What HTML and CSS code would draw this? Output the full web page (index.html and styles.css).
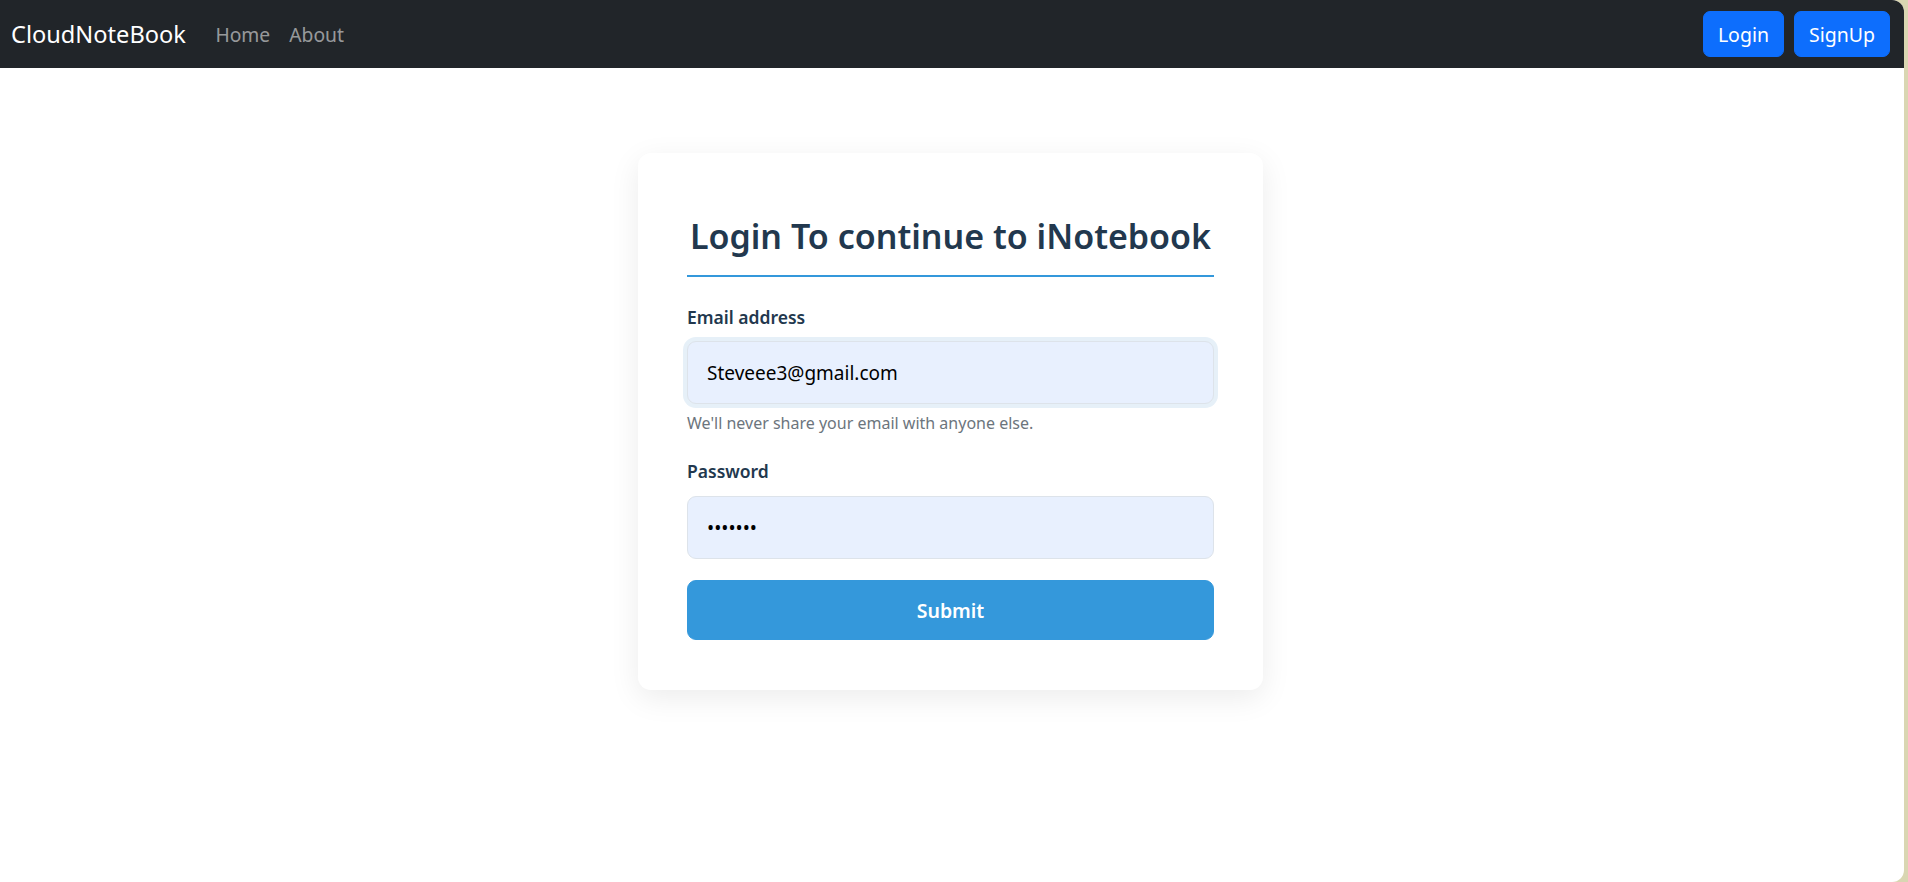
FILE: index.html
```html
<!DOCTYPE html>
<html lang="en">
<head>
<meta charset="utf-8">
<title>CloudNoteBook</title>
<link rel="stylesheet" href="styles.css">
</head>
<body>
<div class="window">
  <nav class="navbar">
    <div class="nav-left">
      <a class="brand" href="#">CloudNoteBook</a>
      <a class="nav-link" href="#">Home</a>
      <a class="nav-link" href="#">About</a>
    </div>
    <div class="nav-right">
      <a class="btn-nav" href="#">Login</a>
      <a class="btn-nav" href="#">SignUp</a>
    </div>
  </nav>
  <main class="main">
    <div class="card">
      <h2 class="title">Login To continue to iNotebook</h2>
      <form class="form">
        <label class="label" for="email">Email address</label>
        <input class="input input-focus" id="email" type="email" value="Steveee3@gmail.com">
        <div class="help">We'll never share your email with anyone else.</div>
        <label class="label label-pw" for="password">Password</label>
        <input class="input input-pw" id="password" type="password" value="1234567">
        <button class="submit" type="button">Submit</button>
      </form>
    </div>
  </main>
</div>
</body>
</html>
```

FILE: styles.css
```css
html, body {
  margin: 0;
  padding: 0;
  background: #d9d6b2;
  font-family: "Noto Sans", "Open Sans", sans-serif;
}

.window {
  width: 1904px;
  height: 882px;
  background: #ffffff;
  border-radius: 0 12px 12px 0;
  overflow: hidden;
}

.navbar {
  height: 68px;
  background: #212529;
  display: flex;
  align-items: center;
  justify-content: space-between;
  padding: 0 14px 0 11px;
  box-sizing: border-box;
}

.nav-left {
  display: flex;
  align-items: center;
}

.brand {
  color: #ffffff;
  text-decoration: none;
  font-size: 23.6px;
  margin-right: 20px;
}

.nav-link {
  color: rgba(255, 255, 255, 0.55);
  text-decoration: none;
  font-size: 19.3px;
  padding: 0 9.5px;
}

.nav-right {
  display: flex;
  gap: 10px;
}

.btn-nav {
  display: flex;
  align-items: center;
  height: 46px;
  box-sizing: border-box;
  padding: 0 14px;
  background: #0d6efd;
  border: 1px solid #0d6efd;
  border-radius: 7px;
  color: #ffffff;
  text-decoration: none;
  font-size: 19.5px;
}

.main {
  display: flex;
  justify-content: center;
  padding-top: 85px;
  padding-right: 3px;
}

.card {
  width: 625px;
  box-sizing: border-box;
  padding: 63px 49px 50px;
  background: #ffffff;
  border-radius: 13px;
  box-shadow: 0 8px 30px rgba(0, 0, 0, 0.08);
}

.title {
  margin: 0;
  text-align: center;
  font-size: 34px;
  line-height: 41px;
  font-weight: 600;
  color: #22384e;
  padding-bottom: 18px;
  border-bottom: 2px solid #3498db;
}

.form {
  display: flex;
  flex-direction: column;
  padding-top: 26px;
}

.label {
  font-size: 17.5px;
  line-height: 29px;
  font-weight: 600;
  color: #22384e;
  margin-bottom: 9px;
}

.label-pw {
  margin-top: 20.5px;
  margin-bottom: 10.5px;
}

.input {
  height: 63px;
  box-sizing: border-box;
  padding: 0 19px;
  background: #e8f0fe;
  border: 1px solid #dde3ea;
  border-radius: 9px;
  font-family: inherit;
  font-size: 19px;
  color: #000000;
  outline: none;
}

.input-focus {
  box-shadow: 0 0 0 4px #e6f0f8;
}

.help {
  margin-top: 7px;
  font-size: 16px;
  line-height: 25px;
  color: #6c757d;
}

.submit {
  margin-top: 21px;
  height: 60px;
  background: #3498db;
  border: 1px solid #3498db;
  border-radius: 9px;
  color: #ffffff;
  font-family: inherit;
  font-size: 19.5px;
  font-weight: 600;
}
```
